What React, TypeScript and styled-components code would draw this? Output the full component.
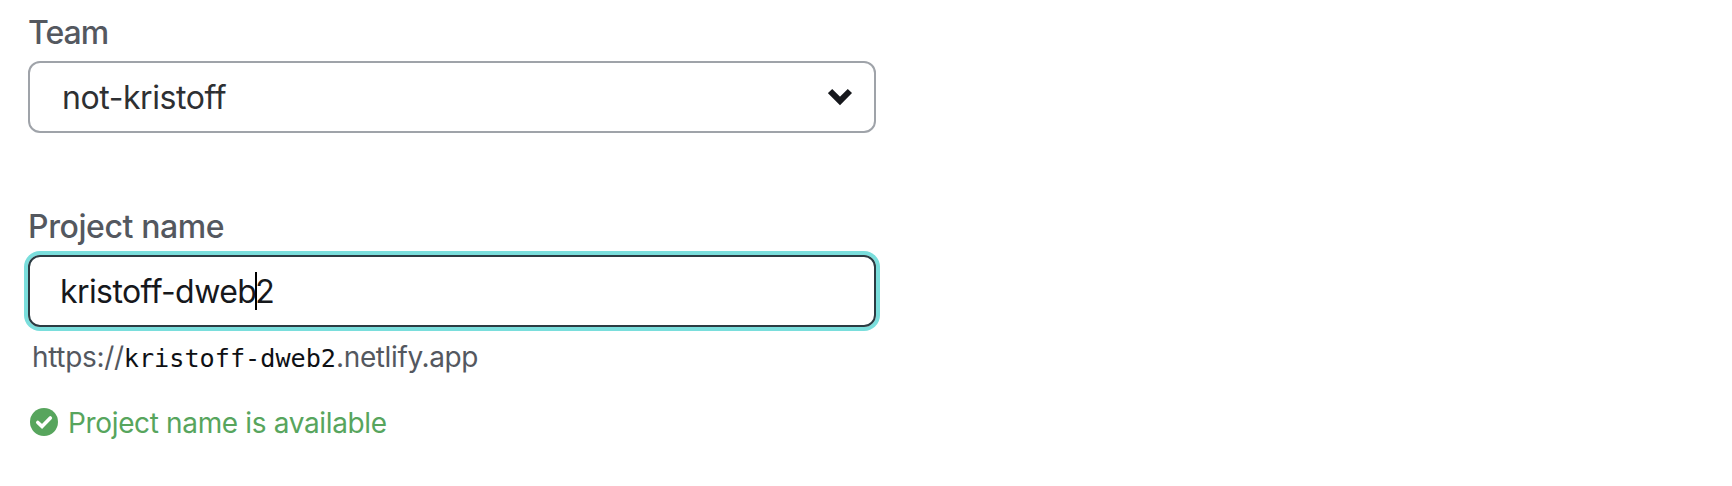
import React from "react";
import styled, { createGlobalStyle } from "styled-components";

const GlobalStyle = createGlobalStyle`
  * { box-sizing: border-box; }
  body { margin: 0; background: #fff; font-family: Inter, "Liberation Sans", sans-serif; }
`;

const Form = styled.form`
  display: flex;
  flex-direction: column;
  width: 876px;
  padding: 11px 0 0 28px;
`;

const Field = styled.div`
  display: flex;
  flex-direction: column;
  height: 194px;
`;

const Label = styled.label<{ $tracking: number }>`
  height: 50px;
  font-size: 32px;
  line-height: 43px;
  font-weight: 500;
  letter-spacing: ${(p) => p.$tracking}px;
  color: #54585f;
  white-space: nowrap;
`;

const Control = styled.div<{ $focused?: boolean }>`
  display: flex;
  align-items: center;
  justify-content: space-between;
  height: 72px;
  flex: none;
  padding: 0 21px 0 ${(p) => (p.$focused ? 30 : 32)}px;
  border: 2px solid ${(p) => (p.$focused ? "#2b3b42" : "#9fa3a9")};
  border-radius: 12px;
  box-shadow: ${(p) => (p.$focused ? "0 0 0 4px #7adedc" : "none")};
`;

const Value = styled.span<{ $tracking: number; $color: string }>`
  display: flex;
  align-items: center;
  padding-top: 2px;
  font-size: 32px;
  line-height: 40px;
  letter-spacing: ${(p) => p.$tracking}px;
  color: ${(p) => p.$color};
  white-space: nowrap;
`;

const Caret = styled.span`
  width: 2px;
  height: 38px;
  margin: -2px -2px 0 -1px;
  background: #000;
`;

const Hint = styled.p`
  margin: 12px 0 0;
  padding-left: 4px;
  height: 66px;
  font-size: 28px;
  line-height: 36px;
  color: #54585f;
  white-space: nowrap;
`;

const Part = styled.span<{ $tracking: number }>`
  letter-spacing: ${(p) => p.$tracking}px;
`;

const Subdomain = styled.code`
  font-family: "DejaVu Sans Mono", monospace;
  font-size: 25.2px;
  color: #0e1014;
`;

const Status = styled.div`
  display: flex;
  align-items: center;
  gap: 10px;
  padding-left: 2px;
  font-size: 28px;
  line-height: 36px;
  letter-spacing: -0.35px;
  color: #57a55d;
  white-space: nowrap;
`;

const CheckIcon = styled.svg`
  margin-bottom: 2px;
`;

const Chevron = () => (
  <svg width="25" height="18" viewBox="0 0 25 18" aria-hidden="true">
    <path d="M2.1 3 12 12.9 21.9 3" fill="none" stroke="#16181c" strokeWidth="6" />
  </svg>
);

const Check = () => (
  <CheckIcon width="28" height="28" viewBox="0 0 28 28" aria-hidden="true">
    <circle cx="14" cy="14" r="14" fill="#57a55d" />
    <path d="M7.8 14.5 12 18.4 20.3 10" fill="none" stroke="#fff" strokeWidth="3.6" strokeLinecap="round" />
  </CheckIcon>
);

export default function App() {
  return (
    <>
      <GlobalStyle />
      <Form>
        <Field>
          <Label $tracking={-1}>Team</Label>
          <Control>
            <Value $tracking={-0.42} $color="#2e3033">not-kristoff</Value>
            <Chevron />
          </Control>
        </Field>
        <Label $tracking={-0.4}>Project name</Label>
        <Control $focused>
          <Value $tracking={-0.58} $color="#16181c">
            <span>kristoff-dweb</span>
            <Caret />
            <span>2</span>
          </Value>
        </Control>
        <Hint>
          <Part $tracking={-0.33}>https://</Part>
          <Subdomain>kristoff-dweb2</Subdomain>
          <Part $tracking={-0.38}>.netlify.app</Part>
        </Hint>
        <Status>
          <Check />
          Project name is available
        </Status>
      </Form>
    </>
  );
}
